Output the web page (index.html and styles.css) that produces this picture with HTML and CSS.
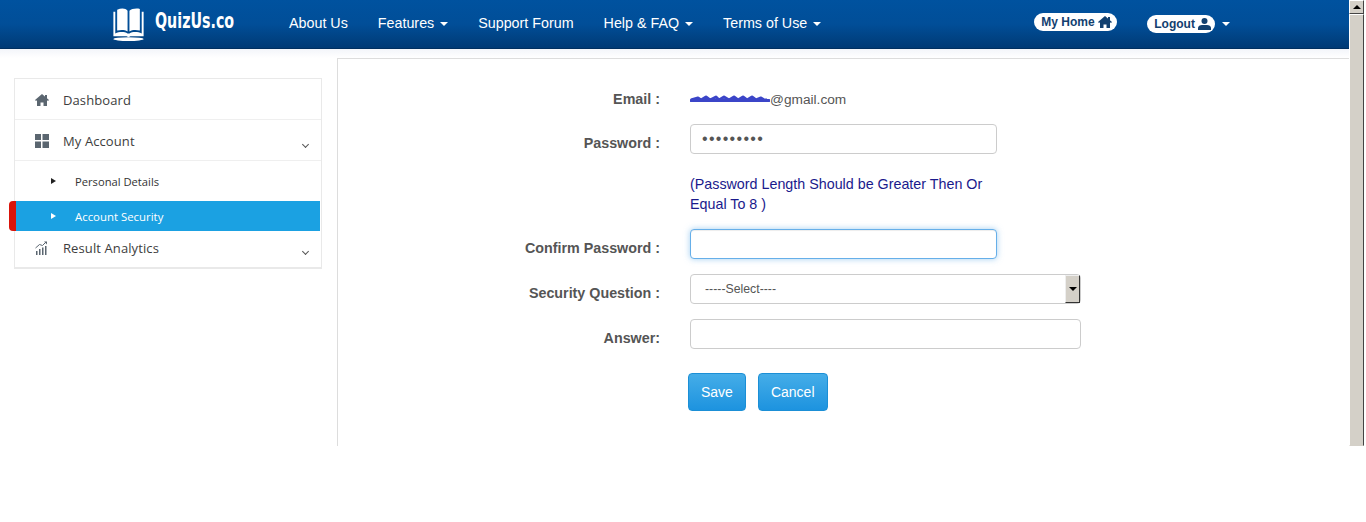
FILE: index.html
```html
<!DOCTYPE html>
<html lang="en">
<head>
  <meta charset="UTF-8">
  <title>QuizUs.co - Account Security</title>
  <link rel="stylesheet" href="styles.css">
</head>
<body>
  <div class="screen">
    <div class="page">
      <header class="topbar">
        <a class="logo" href="#">
          <svg class="logo-icon" width="33" height="34" viewBox="0 0 34 36">
            <path d="M1 5h2v23c4-2 10-2 13 0h2c3-2 9-2 13 0V5h2v26H19c-1 1-3 1-4 0H1z" fill="#fff"/>
            <path d="M5 3c4-2 9-2 11 1v22c-3-2-7-2-11-1zM29 2c-4-1-9 0-11 2v22c3-2 7-2 11-1z" fill="#fff"/>
            <ellipse cx="17" cy="34" rx="16" ry="2" fill="#fff"/>
          </svg>
          <span class="logo-text">QuizUs.co</span>
        </a>
        <nav class="mainnav">
          <a href="#">About Us</a>
          <a href="#">Features <i class="caret"></i></a>
          <a href="#">Support Forum</a>
          <a href="#">Help &amp; FAQ <i class="caret"></i></a>
          <a href="#">Terms of Use <i class="caret"></i></a>
        </nav>
        <div class="usernav">
          <a class="pill pill-home" href="#">My Home
            <svg width="14" height="12" viewBox="0 0 14 12"><path d="M7 0l7 6-1 1-1-.8V12H8.500V8.500h-3V12H2V6.200L1 7 0 6zM10 1h2v3.500l-2-1.700z" fill="#12406f"/></svg>
          </a>
          <a class="pill pill-logout" href="#">Logout
            <svg width="13" height="12" viewBox="0 0 13 12"><circle cx="6.500" cy="3" r="3" fill="#12406f"/><path d="M0 12V10c0-2 2-3 4-3h5c2 0 4 1 4 3v2z" fill="#12406f"/></svg>
          </a>
          <i class="caret"></i>
        </div>
      </header>

      <div class="main">
        <aside class="sidebar">
          <ul class="sidemenu">
            <li class="menu-item">
              <svg width="14" height="12" viewBox="0 0 14 12"><path d="M7 0l7 6-1 1-1-.8V12H8.500V8.500h-3V12H2V6.200L1 7 0 6zM10 1h2v3.500l-2-1.700z" fill="#5b6670"/></svg>
              <span>Dashboard</span>
            </li>
            <li class="menu-item item-account">
              <svg width="14" height="14" viewBox="0 0 14 14"><path d="M0 0h6v6H0zM7.500 0H14v6H7.500zM0 7.500h6V14H0zM7.500 7.500H14V14H7.500z" fill="#5b6670"/></svg>
              <span>My Account</span>
              <i class="chevron"></i>
            </li>
            <li class="sub-item"><i class="arrow"></i><span>Personal Details</span></li>
            <li class="sub-item active"><i class="arrow"></i><span>Account Security</span></li>
            <li class="menu-item item-result">
              <svg width="14" height="14" viewBox="0 0 14 14"><path d="M1 10h1.500v4H1zM4 8h1.500v6H4zM7 6.500h1.500V14H7zM10 5h1.500v9H10z" fill="#5b6670"/><path d="M0.500 7l4-3.500 3 1L11 1" stroke="#5b6670" fill="none"/><path d="M9 0.500h3v3z" fill="#5b6670"/></svg>
              <span>Result Analytics</span>
              <i class="chevron"></i>
            </li>
          </ul>
        </aside>

        <section class="content">
          <form class="form">
            <div class="row row-email">
              <label>Email :</label>
              <div class="email">
                <svg class="scribble" width="80" height="8" viewBox="0 0 80 8"><path d="M1 5L8 3l3 2 5-3 4 3 6-3 3 3 5-3 5 3 5-3 4 3 5-3 4 3 5-3 4 3 5-2 3 2h3" stroke="#3b45c8" stroke-width="3" stroke-linejoin="round" fill="none"/><path d="M1 5.500h78" stroke="#3b45c8" stroke-width="3" stroke-linecap="round"/></svg>
                <span>@gmail.com</span>
              </div>
            </div>
            <div class="row row-password">
              <label>Password :</label>
              <input class="field field-short field-dots" type="password" value="123456789">
            </div>
            <p class="hint">(Password Length Should be Greater Then Or Equal To 8 )</p>
            <div class="row row-confirm">
              <label>Confirm Password :</label>
              <input class="field field-short is-focus" type="password">
            </div>
            <div class="row row-question">
              <label>Security Question :</label>
              <div class="select-wrap">
                <select class="field field-select"><option>-----Select----</option></select>
                <span class="select-btn"><i></i></span>
              </div>
            </div>
            <div class="row row-answer">
              <label>Answer:</label>
              <input class="field" type="text">
            </div>
            <div class="actions">
              <button class="btn" type="button">Save</button>
              <button class="btn" type="button">Cancel</button>
            </div>
          </form>
        </section>
      </div>
    </div>

    <div class="scrollbar">
      <div class="scroll-up"><i></i></div>
      <div class="scroll-track"></div>
    </div>
  </div>
</body>
</html>
```

FILE: styles.css
```css
* { box-sizing: border-box; }
body { margin: 0; background: #fff; font-family: "Liberation Sans", Arial, sans-serif; color: #555; overflow: hidden; }
a { text-decoration: none; }
ul { list-style: none; margin: 0; padding: 0; }

.screen { display: flex; height: 446px; }
.page { flex: 1; display: flex; flex-direction: column; min-width: 0; }

/* top bar */
.topbar { height: 49px; flex: none; display: flex; align-items: flex-start; background: linear-gradient(#00529f, #014e98 50%, #003a75); border-bottom: 1px solid #002f60; color: #fff; }
.logo { display: flex; margin-left: 112px; padding-top: 7px; width: 177px; color: #fff; }
.logo-text { display: block; font-family: "DejaVu Sans Condensed", "DejaVu Sans", sans-serif; font-weight: bold; font-size: 22px; line-height: 28px; margin-left: 10px; transform: scaleX(.72); transform-origin: left center; }
.mainnav { display: flex; gap: 30px; padding-top: 15px; }
.mainnav a { color: #fff; font-size: 14.300px; line-height: 17px; white-space: nowrap; }
.caret { display: inline-block; width: 0; height: 0; margin-left: 2px; vertical-align: middle; border-top: 4px solid #fff; border-left: 4px solid transparent; border-right: 4px solid transparent; }
.usernav { display: flex; align-items: flex-start; margin-left: 213px; }
.pill { display: flex; align-items: center; gap: 3px; height: 18px; padding: 0 5px 0 7px; border-radius: 9px; background: #fff; color: #12406f; font-size: 12px; font-weight: bold; white-space: nowrap; }
.pill svg { flex: none; }
.pill-home { margin-top: 13px; width: 83px; }
.pill-logout { margin: 15px 0 0 30px; width: 68px; }
.usernav .caret { margin: 22px 0 0 7px; }

/* main area */
.main { flex: 1; display: flex; min-height: 0; background: linear-gradient(#f3f5fa, #fff 9px); }
.sidebar { width: 337px; flex: none; padding: 29px 0 0 14px; }
.sidemenu { width: 308px; border: 1px solid #e9e9e9; border-bottom-width: 2px; background: #fff; font-family: "Open Sans", sans-serif; color: #3d3d3d; }
.menu-item { display: flex; align-items: center; position: relative; height: 41px; padding: 2px 0 0 20px; font-size: 13px; letter-spacing: 0.1px; border-bottom: 1px solid #efefef; }
.menu-item span { margin-left: 14px; }
.item-result { height: 36px; padding: 0 0 2px 20px; border-bottom: 0; }
.chevron { position: absolute; right: 13px; top: 22px; width: 5px; height: 5px; border-right: 1px solid #555; border-bottom: 1px solid #555; transform: rotate(45deg); }
.item-result .chevron { top: 18px; }
.sub-item { display: flex; align-items: center; height: 40px; padding-left: 36px; font-size: 11.200px; color: #333; }
.sub-item span { margin-left: 19px; }
.arrow { width: 0; height: 0; border-left: 5px solid #222; border-top: 3px solid transparent; border-bottom: 3px solid transparent; }
.sub-item.active { position: relative; height: 30px; margin-right: 1px; background: #1ba1e2; color: #fff; font-size: 11.400px; }
.sub-item.active::before { content: ""; position: absolute; left: -6px; top: 0; bottom: 0; width: 7px; background: #d9140a; border-radius: 4px 0 0 4px; }
.sub-item.active .arrow { border-left-color: #fff; }

/* form */
.content { flex: 1; margin-top: 9px; border-left: 1px solid #ddd; border-top: 1px solid #ddd; background: #fff; }
.form { width: 744px; }
.row { display: grid; grid-template-columns: 322px 391px; column-gap: 30px; align-items: center; }
.row label { text-align: right; font-size: 14.300px; font-weight: bold; color: #555; }
.row-email { margin-top: 31px; height: 18px; }
.row-password { margin-top: 16px; }
.row-password label { padding-top: 8px; }
.row-confirm { margin-top: 15px; }
.row-confirm label { padding-top: 7px; }
.row-question { margin-top: 15px; }
.row-question label { padding-top: 8px; }
.row-answer { margin-top: 15px; }
.row-answer label { padding-top: 8px; }
.email { display: flex; align-items: center; font-size: 13.700px; color: #555; }
.scribble { flex: none; }
.field { display: block; width: 100%; height: 30px; padding: 0 14px; border: 1px solid #ccc; border-radius: 4px; background: #fff; font-family: "Liberation Sans", Arial, sans-serif; font-size: 14px; color: #555; }
.field-short { width: 307px; }
.field-dots { padding-left: 11px; font-size: 16px; letter-spacing: 1.300px; }
.is-focus { border-color: #66afe9; box-shadow: inset 0 1px 1px rgba(0,0,0,.075), 0 0 6px rgba(102,175,233,.6); }
.hint { width: 322px; margin: 20px 0 0 352px; font-size: 14.300px; line-height: 20px; color: #1a1a8c; }
.select-wrap { position: relative; }
.field-select { appearance: none; font-size: 12.300px; }
.select-btn { position: absolute; top: 1px; right: 1px; width: 15px; height: 28px; display: flex; align-items: center; justify-content: center; background: #d4d0c8; border: 1px solid; border-color: #eee #333 #333 #eee; }
.select-btn i { width: 0; height: 0; border-top: 4px solid #000; border-left: 4px solid transparent; border-right: 4px solid transparent; }
.actions { display: flex; gap: 12px; margin: 24px 0 0 350px; }
.btn { height: 38px; padding: 0 12px; border: 1px solid #1b8fd6; border-radius: 4px; background: linear-gradient(#45ade8, #1d93df); color: #fff; font-family: "Liberation Sans", Arial, sans-serif; font-size: 14px; }

/* window scrollbar */
.scrollbar { width: 17px; flex: none; display: flex; flex-direction: column; padding-right: 2px; background: #fff; }
.scroll-up { height: 14px; flex: none; display: flex; align-items: center; justify-content: center; background: #d4d0c8; border: 1px solid; border-color: #fff #444 #444 #fff; }
.scroll-up i { width: 0; height: 0; border-bottom: 4px solid #000; border-left: 4px solid transparent; border-right: 4px solid transparent; }
.scroll-track { flex: 1; background: #d4d0c8; border: 1px solid; border-color: #fff #444 #d4d0c8 #fff; }
```
